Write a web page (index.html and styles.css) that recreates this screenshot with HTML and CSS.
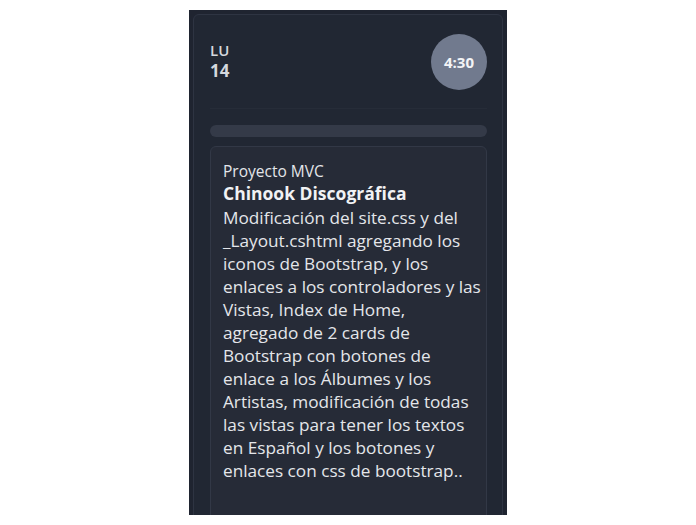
FILE: index.html
```html
<!DOCTYPE html>
<html lang="es">
<head>
<meta charset="utf-8">
<link rel="stylesheet" href="styles.css">
</head>
<body>
<div class="panel">
  <div class="card">
    <div class="head">
      <div class="date">
        <div class="dow">LU</div>
        <div class="day">14</div>
      </div>
      <div class="time">4:30</div>
    </div>
    <div class="bar"></div>
    <div class="entry">
      <div class="project">Proyecto MVC</div>
      <div class="title">Chinook Discográfica</div>
      <p class="desc">Modificación del site.css y del _Layout.cshtml agregando los iconos de Bootstrap, y los enlaces a los controladores y las Vistas, Index de Home,<br>agregado de 2 cards de Bootstrap con botones de enlace a los Álbumes y los Artistas, modificación de todas las vistas para tener los textos en Español y los botones y enlaces con css de bootstrap..</p>
    </div>
  </div>
</div>
</body>
</html>
```

FILE: styles.css
```css
html, body {
  margin: 0;
  padding: 0;
  background: #ffffff;
  height: 100%;
}
body {
  font-family: "Open Sans", "Noto Sans", sans-serif;
  color: #e4e6ea;
}
.panel {
  position: relative;
  margin: 10px 0 0 189px;
  width: 318px;
  height: 505px;
  box-sizing: border-box;
  padding: 4px 4px 0 4px;
  background: #1f2430;
  overflow: hidden;
}
.card {
  box-sizing: border-box;
  border: 1px solid #2e3442;
  border-radius: 6px;
  background: #212733;
  padding: 19px 15px 0 16px;
  height: 560px;
}
.head {
  display: flex;
  justify-content: space-between;
  align-items: center;
  padding-bottom: 18px;
  border-bottom: 1px solid #262c38;
}
.date {
  margin-top: -2px;
}
.dow {
  font-size: 15px;
  line-height: 19px;
  font-weight: 600;
  color: #d5d8de;
}
.day {
  font-size: 17px;
  line-height: 21px;
  font-weight: 700;
  color: #d5d8de;
}
.time {
  width: 56px;
  height: 56px;
  border-radius: 50%;
  background: #717a8e;
  color: #f3f4f6;
  font-size: 15px;
  font-weight: 700;
  display: flex;
  align-items: center;
  justify-content: center;
}
.bar {
  margin-top: 16px;
  height: 12px;
  border-radius: 6px;
  background: #343a48;
}
.entry {
  margin-top: 9px;
  border: 1px solid #323846;
  border-radius: 6px;
  background: #262b37;
  padding: 14px 1px 40px 12px;
  min-height: 400px;
}
.project {
  font-size: 15.5px;
  line-height: 20px;
  color: #e4e6ea;
}
.title {
  font-size: 17.5px;
  font-weight: 700;
  line-height: 25px;
  color: #f1f2f4;
}
.desc {
  margin: 0;
  font-size: 17.2px;
  line-height: 23px;
  color: #e4e6ea;
}
```
